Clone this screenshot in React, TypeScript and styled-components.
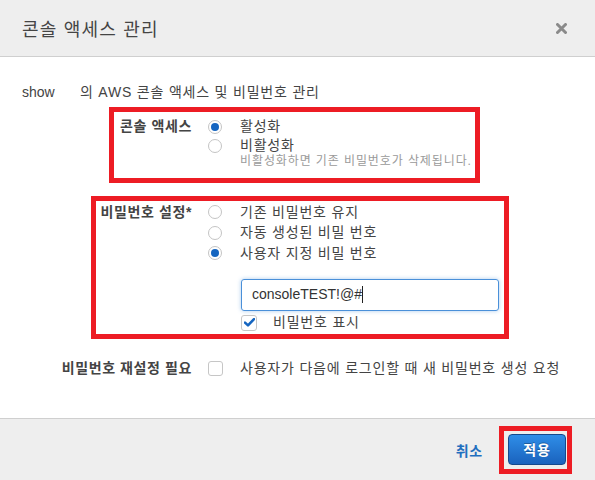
import React, { FC } from "react";
import styled, { createGlobalStyle } from "styled-components";

const GlobalStyle = createGlobalStyle`
  html, body {
    margin: 0;
    padding: 0;
    background: #ffffff;
  }
  body {
    font-family: "Liberation Sans", "Noto Sans CJK KR", sans-serif;
    color: #444;
  }
`;

const Dialog = styled.div`
  width: 595px;
  height: 480px;
  display: flex;
  flex-direction: column;
  background: #fff;
`;

const Header = styled.div`
  height: 57px;
  box-sizing: border-box;
  background: #eeeeee;
  border-bottom: 1px solid #cfcfcf;
  display: flex;
  align-items: center;
  justify-content: space-between;
  padding: 0 28px 0 22px;
`;

const Title = styled.div`
  font-size: 18px;
  color: #444;
  letter-spacing: 1.2px;
`;

const CloseButton = styled.div`
  width: 11px;
  height: 11px;
  display: flex;
  svg {
    display: block;
  }
`;

const Body = styled.div`
  flex: 1;
  padding: 26px 22px 0 22px;
  font-size: 14px;
  line-height: 19px;
  letter-spacing: 0.8px;
`;

const Intro = styled.div`
  display: flex;
  color: #444;
`;

const Username = styled.span`
  width: 58px;
  letter-spacing: 0;
`;

const Highlight = styled.div<{ $left: number; $width: number; $pad: string }>`
  box-sizing: border-box;
  margin-left: ${(p) => p.$left}px;
  width: ${(p) => p.$width}px;
  border: 5px solid #ed1c24;
  padding: ${(p) => p.$pad};
`;

const FieldRow = styled.div<{ $labelWidth: number }>`
  display: grid;
  grid-template-columns: ${(p) => p.$labelWidth}px 1fr;
  column-gap: 16px;
  align-items: start;
`;

const Label = styled.div<{ $rowHeight?: number }>`
  text-align: right;
  font-weight: bold;
  color: #444;
  line-height: ${(p) => p.$rowHeight || 19}px;
  white-space: nowrap;
  letter-spacing: 0.6px;
`;

const Options = styled.div`
  display: flex;
  flex-direction: column;
`;

const Option = styled.label<{ $height: number }>`
  display: flex;
  align-items: center;
  height: ${(p) => p.$height}px;
  gap: 18px;
  color: #444;
`;

const Radio = styled.span<{ $checked?: boolean }>`
  width: 14px;
  height: 14px;
  box-sizing: border-box;
  border-radius: 50%;
  border: 1px solid #c4c4c4;
  background: #fff;
  display: flex;
  align-items: center;
  justify-content: center;
  flex-shrink: 0;
  &::after {
    content: "";
    width: 8px;
    height: 8px;
    border-radius: 50%;
    background: ${(p) => (p.$checked ? "#1565c0" : "transparent")};
  }
`;

const Help = styled.div`
  margin-left: 32px;
  font-size: 12px;
  line-height: 13px;
  color: #9a9a9a;
  letter-spacing: 0.9px;
`;

const PasswordInput = styled.div`
  margin-top: 15px;
  margin-left: 33px;
  width: 258px;
  height: 32px;
  box-sizing: border-box;
  border: 1px solid #4a90d9;
  border-radius: 3px;
  box-shadow: 0 0 4px rgba(74, 144, 217, 0.45);
  display: flex;
  align-items: center;
  padding-left: 10px;
  font-size: 14px;
  color: #333;
  letter-spacing: 0;
`;

const Caret = styled.span`
  display: inline-block;
  width: 1px;
  height: 17px;
  background: #222;
`;

const CheckRow = styled.label<{ $indent?: number; $gap: number }>`
  display: flex;
  align-items: center;
  gap: ${(p) => p.$gap}px;
  margin-left: ${(p) => p.$indent || 0}px;
  height: 20px;
  color: #444;
`;

const Checkbox = styled.span<{ $size: number }>`
  width: ${(p) => p.$size}px;
  height: ${(p) => p.$size}px;
  box-sizing: border-box;
  border: 1px solid #c6c6c6;
  border-radius: 3px;
  background: #fff;
  display: flex;
  align-items: center;
  justify-content: center;
  flex-shrink: 0;
`;

const Footer = styled.div`
  height: 62px;
  box-sizing: border-box;
  border-top: 1px solid #cfcfcf;
  background: #eeeeee;
  display: flex;
  align-items: center;
  justify-content: flex-end;
  padding-right: 23px;
  gap: 16px;
`;

const CancelLink = styled.span`
  color: #1f6fbf;
  font-size: 14px;
  font-weight: bold;
  letter-spacing: 0.8px;
`;

const ButtonFrame = styled.div`
  border: 5px solid #ed1c24;
  padding: 3px 1px 4px 4px;
`;

const ApplyButton = styled.button`
  width: 58px;
  height: 31px;
  border: 1px solid #15498c;
  border-radius: 4px;
  background: linear-gradient(#2f8ee8, #1a62bd);
  color: #fff;
  font-family: "Liberation Sans", "Noto Sans CJK KR", sans-serif;
  font-size: 14px;
  font-weight: bold;
  letter-spacing: 0.8px;
  padding: 0;
  display: block;
  text-shadow: 0 -1px 0 rgba(0, 0, 0, 0.3);
`;

const CheckMark: FC = () => (
  <svg width="11" height="9" viewBox="0 0 11 9">
    <path d="M1 4.6 L4 7.4 L10 1.2" stroke="#1565c0" strokeWidth="2.6" fill="none" strokeLinecap="round" strokeLinejoin="round" />
  </svg>
);

const App: FC = () => {
  return (
    <Dialog>
      <GlobalStyle />
      <Header>
        <Title>콘솔 액세스 관리</Title>
        <CloseButton>
          <svg width="11" height="11" viewBox="0 0 11 11">
            <path d="M1.5 1.5 L9.5 9.5 M9.5 1.5 L1.5 9.5" stroke="#8a8a8a" strokeWidth="3" strokeLinecap="round" />
          </svg>
        </CloseButton>
      </Header>

      <Body>
        <Intro>
          <Username>show</Username>
          <span>의 AWS 콘솔 액세스 및 비밀번호 관리</span>
        </Intro>

        <Highlight $left={87} $width={371} $pad="5px 0 10px 0" style={{ marginTop: 5 }}>
          <FieldRow $labelWidth={78}>
            <Label>콘솔 액세스</Label>
            <Options>
              <Option $height={19}>
                <Radio $checked />
                <span>활성화</span>
              </Option>
              <Option $height={19}>
                <Radio />
                <span>비활성화</span>
              </Option>
              <Help>비활성화하면 기존 비밀번호가 삭제됩니다.</Help>
            </Options>
          </FieldRow>
        </Highlight>

        <Highlight $left={69} $width={418} $pad="1px 0 1px 0" style={{ marginTop: 13 }}>
          <FieldRow $labelWidth={96}>
            <Label $rowHeight={20}>비밀번호 설정*</Label>
            <Options>
              <Option $height={20.5}>
                <Radio />
                <span>기존 비밀번호 유지</span>
              </Option>
              <Option $height={20.5}>
                <Radio />
                <span>자동 생성된 비밀 번호</span>
              </Option>
              <Option $height={20.5}>
                <Radio $checked />
                <span>사용자 지정 비밀 번호</span>
              </Option>
              <PasswordInput>
                consoleTEST!@#
                <Caret />
              </PasswordInput>
              <CheckRow $indent={33} $gap={16} style={{ marginTop: 2 }}>
                <Checkbox $size={16}>
                  <CheckMark />
                </Checkbox>
                <span>비밀번호 표시</span>
              </CheckRow>
            </Options>
          </FieldRow>
        </Highlight>

        <FieldRow $labelWidth={170} style={{ marginTop: 20 }}>
          <Label>비밀번호 재설정 필요</Label>
          <CheckRow $gap={17}>
            <Checkbox $size={15} />
            <span>사용자가 다음에 로그인할 때 새 비밀번호 생성 요청</span>
          </CheckRow>
        </FieldRow>
      </Body>

      <Footer>
        <CancelLink>취소</CancelLink>
        <ButtonFrame>
          <ApplyButton>적용</ApplyButton>
        </ButtonFrame>
      </Footer>
    </Dialog>
  );
};

export default App;
